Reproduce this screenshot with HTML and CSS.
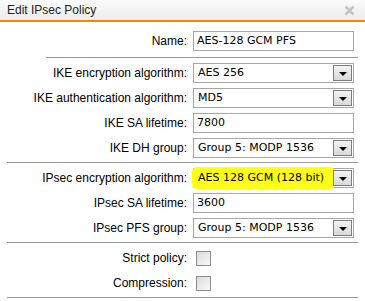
FILE: index.html
```html
<!DOCTYPE html>
<html>
<head>
    <meta charset="utf-8" />
    <title>Edit IPsec Policy</title>
    <link rel="stylesheet" href="styles.css">
</head>
<body>
    <div class="dialog">
        <div class="titlebar">
            <span class="title">Edit IPsec Policy</span>
            <svg class="close" width="11" height="11" viewBox="0 0 11 11">
                <path d="M1.5,1.5 9.5,9.5 M9.5,1.5 1.5,9.5" />
            </svg>
        </div>

        <div class="section first">
            <div class="row">
                <label>Name:</label>
                <div class="field">AES-128 GCM PFS</div>
            </div>
        </div>
        <div class="rule short"></div>

        <div class="section">
            <div class="row">
                <label>IKE encryption algorithm:</label>
                <div class="select"><span class="value">AES 256</span><span class="btn"></span></div>
            </div>
            <div class="row">
                <label>IKE authentication algorithm:</label>
                <div class="select"><span class="value">MD5</span><span class="btn"></span></div>
            </div>
            <div class="row">
                <label>IKE SA lifetime:</label>
                <div class="field">7800</div>
            </div>
            <div class="row">
                <label>IKE DH group:</label>
                <div class="select"><span class="value">Group 5: MODP 1536</span><span class="btn"></span></div>
            </div>
        </div>
        <div class="rule"></div>

        <div class="section">
            <div class="row">
                <label>IPsec encryption algorithm:</label>
                <div class="select marked"><span class="value">AES 128 GCM (128 bit)</span><span class="btn"></span></div>
            </div>
            <div class="row">
                <label>IPsec SA lifetime:</label>
                <div class="field">3600</div>
            </div>
            <div class="row">
                <label>IPsec PFS group:</label>
                <div class="select"><span class="value">Group 5: MODP 1536</span><span class="btn"></span></div>
            </div>
        </div>
        <div class="rule"></div>

        <div class="section">
            <div class="row">
                <label>Strict policy:</label>
                <span class="check"></span>
            </div>
            <div class="row">
                <label>Compression:</label>
                <span class="check"></span>
            </div>
        </div>
        <div class="rule"></div>
    </div>
</body>
</html>
```

FILE: styles.css
```css
body {
    margin: 0;
    background: #fff;
    font-family: "Liberation Sans", Arial, sans-serif;
    font-size: 12px;
    color: #000;
}
.dialog {
    width: 365px;
    height: 301px;
    overflow: hidden;
}
.titlebar {
    display: flex;
    align-items: center;
    justify-content: space-between;
    height: 20px;
    padding: 0 10px 0 7px;
    background: linear-gradient(#fbfbfb, #ececec);
    border-bottom: 2px solid #f28a00;
}
.title {
    color: #222;
    font-size: 12px;
}
.close path {
    fill: none;
    stroke: #c4c4c4;
    stroke-width: 2.6px;
}
.section {
    padding: 5px 0 4px;
}
.section.first {
    padding: 9px 0 6px;
}
.row {
    display: grid;
    grid-template-columns: 187px 161px;
    column-gap: 6px;
    align-items: center;
    height: 20px;
    margin-bottom: 5px;
}
.row:last-child {
    margin-bottom: 0;
}
label {
    text-align: right;
}
.rule {
    height: 1px;
    margin: 0 7px;
    background: #9a9a9a;
}
.rule.short {
    margin-left: 46px;
}
.field, .select {
    box-sizing: border-box;
    height: 20px;
    border: 1px solid #a6a6a6;
    background: #fff;
    font: 11px "DejaVu Sans", Tahoma, sans-serif;
    line-height: 18px;
}
.field {
    padding-left: 3px;
}
.select {
    display: flex;
}
.select .value {
    flex: 1;
    padding-left: 4px;
}
.select .btn {
    position: relative;
    width: 19px;
    margin: 1px;
    box-sizing: border-box;
    border: 1px solid #7c7c7c;
    background: linear-gradient(#f4f4f4, #d9d9d9);
}
.select .btn::after {
    content: "";
    position: absolute;
    left: 5px;
    top: 6px;
    border-left: 4px solid transparent;
    border-right: 4px solid transparent;
    border-top: 4px solid #000;
}
.select.marked .value {
    background: #ffff14;
    box-shadow: 0 0 0 3px #ffff14;
    border-radius: 2px;
    margin: 1px 0 1px 1px;
    line-height: 16px;
    padding-left: 3px;
}
.check {
    box-sizing: border-box;
    width: 15px;
    height: 15px;
    margin-left: 3px;
    border: 1px solid #8c8c8c;
    background: linear-gradient(135deg, #dcdcdc, #f8f8f8);
}
```
